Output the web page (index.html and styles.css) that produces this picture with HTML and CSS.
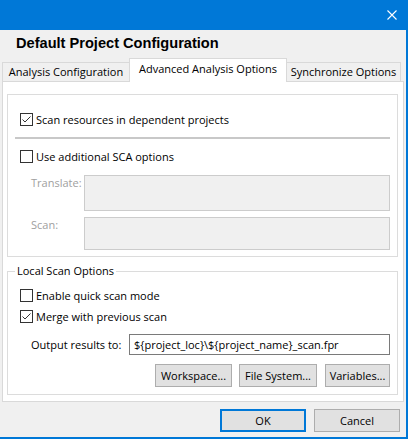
FILE: index.html
```
<!DOCTYPE html>
<html>
<head>
<meta charset="utf-8">
<link rel="stylesheet" href="styles.css">
</head>
<body>
<div class="window">
  <div class="titlebar">
    <svg class="close" width="10" height="10" viewBox="0 0 10 10"><path d="M0.5 0.5L9.5 9.5M9.5 0.5L0.5 9.5" stroke="#fff" stroke-width="1.1" fill="none"/></svg>
  </div>
  <div class="header">Default Project Configuration</div>
  <div class="tabs">
    <div class="tab t1">Analysis Configuration</div>
    <div class="tab active">Advanced Analysis Options</div>
    <div class="tab t3">Synchronize Options</div>
  </div>
  <div class="page">
    <div class="group">
      <label class="check first"><span class="box"><svg width="11" height="11" viewBox="0 0 11 11"><polyline points="1.5,5.5 4,8 9.5,2.5" fill="none" stroke="#333" stroke-width="1"/></svg></span>Scan resources in dependent projects</label>
      <div class="sep"></div>
      <label class="check second"><span class="box"></span>Use additional SCA options</label>
      <div class="frow translate"><span class="flabel">Translate:</span><div class="dbox tall"></div></div>
      <div class="frow scan"><span class="flabel">Scan:</span><div class="dbox short"></div></div>
    </div>
    <fieldset class="local">
      <legend>Local Scan Options</legend>
      <label class="check quick"><span class="box"></span>Enable quick scan mode</label>
      <label class="check merge"><span class="box"><svg width="11" height="11" viewBox="0 0 11 11"><polyline points="1.5,5.5 4,8 9.5,2.5" fill="none" stroke="#333" stroke-width="1"/></svg></span>Merge with previous scan</label>
      <div class="orow"><span class="olabel">Output results to:</span><div class="ofield">${project_loc}\${project_name}_scan.fpr</div></div>
      <div class="brow">
        <button class="btn b-ws">Workspace...</button>
        <button class="btn b-fs">File System...</button>
        <button class="btn b-var">Variables...</button>
      </div>
    </fieldset>
  </div>
  <div class="footer">
    <button class="btn dlg ok">OK</button>
    <button class="btn dlg">Cancel</button>
  </div>
</div>
</body>
</html>
```
FILE: styles.css
```
* { box-sizing: border-box; }
html, body { margin: 0; padding: 0; }
body {
  width: 408px;
  height: 439px;
  overflow: hidden;
  background: #f0f0f0;
  font-family: "Open Sans", "Noto Sans", sans-serif;
  font-size: 11px;
  color: #000;
}
.window {
  width: 408px;
  height: 439px;
  background: #f0f0f0;
  border-right: 2px solid #0078d7;
  border-bottom: 2px solid #0078d7;
}
.titlebar {
  height: 30px;
  background: #0078d7;
  display: flex;
  justify-content: flex-end;
  align-items: center;
  padding-right: 9px;
}
.close { display: block; }
.header {
  height: 27px;
  line-height: 27px;
  padding-left: 16px;
  font-family: "Liberation Sans", Arial, sans-serif;
  font-weight: bold;
  font-size: 14.6px;
}
.tabs {
  display: flex;
  align-items: flex-end;
  height: 24px;
  padding-left: 2px;
}
.tab {
  height: 19px;
  line-height: 17px;
  border: 1px solid #d9d9d9;
  border-bottom: none;
  background: #f0f0f0;
  text-align: center;
  white-space: nowrap;
}
.t1 { width: 127px; border-right: none; }
.t3 { width: 114px; border-left: none; }
.tab.active {
  width: 158px;
  height: 24px;
  line-height: 20px;
  margin-bottom: -1px;
  background: #fff;
  position: relative;
  z-index: 1;
}
.page {
  margin-left: 2px;
  width: 402px;
  height: 321px;
  background: #fff;
  border: 1px solid #d9d9d9;
  padding: 12px 0 0 4px;
}
.group {
  width: 391px;
  height: 163px;
  border: 1px solid #dcdcdc;
  padding-left: 12px;
}
.check {
  display: flex;
  align-items: center;
  height: 19px;
  gap: 3px;
  white-space: nowrap;
}
.box {
  width: 13px;
  height: 13px;
  border: 1px solid #333;
  background: #fff;
  flex: none;
  display: flex;
}
.box svg { display: block; }
.first { margin-top: 15px; }
.sep {
  height: 2px;
  background: #c8c8c8;
  margin: 8px 0 0 -5px;
  width: 375px;
}
.second { margin-top: 8px; }
.frow {
  display: flex;
  margin-left: 11px;
}
.translate { margin-top: 9px; }
.scan { margin-top: 6px; }
.flabel {
  width: 53px;
  line-height: 16px;
  color: #a0a0a0;
}
.dbox {
  width: 306px;
  background: #f0f0f0;
  border: 1px solid #cccccc;
}
.tall { height: 36px; }
.short { height: 33px; }
.local {
  margin: 6px 0 0 0;
  width: 391px;
  min-width: 0;
  border: 1px solid #dcdcdc;
  padding: 0 6px 7px 7px;
}
.local legend {
  padding: 0 2px;
  line-height: 16px;
}
.quick { margin-top: 7px; margin-left: 5px; }
.merge { margin-top: 2px; margin-left: 5px; }
.orow {
  display: flex;
  align-items: center;
  margin-top: 8px;
  margin-left: 16px;
}
.olabel { width: 98px; white-space: nowrap; }
.ofield {
  width: 261px;
  height: 21px;
  line-height: 19px;
  border: 1px solid #7a7a7a;
  background: #fff;
  padding-left: 4px;
  white-space: nowrap;
}
.brow {
  display: flex;
  justify-content: flex-end;
  gap: 7px;
  margin-top: 9px;
  padding-right: 1px;
}
.btn {
  font-family: inherit;
  font-size: 11px;
  color: #000;
  background: #e1e1e1;
  border: 1px solid #adadad;
  height: 23px;
  padding: 0;
  margin: 0;
}
.b-ws { width: 77px; }
.b-fs { width: 78px; margin-right: 1px; }
.b-var { width: 65px; }
.footer {
  display: flex;
  justify-content: flex-end;
  gap: 8px;
  padding: 7px 6px 0 0;
}
.dlg { width: 86px; }
.ok { border: 2px solid #0078d7; }
```
